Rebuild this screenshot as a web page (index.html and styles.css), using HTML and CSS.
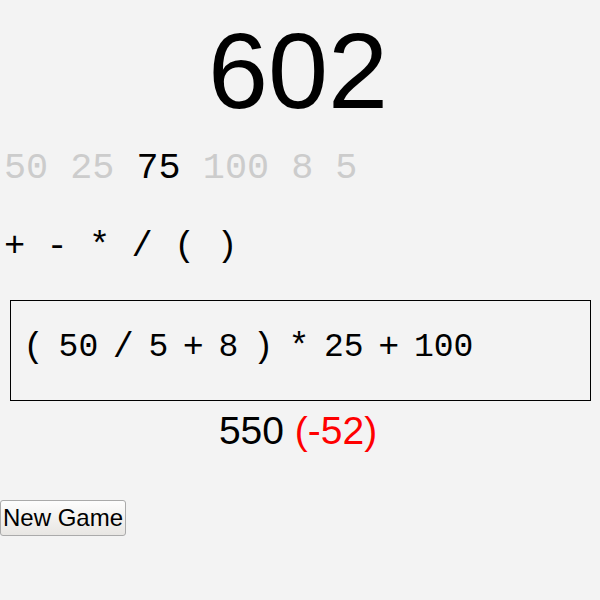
FILE: index.html
```html
<!DOCTYPE html>
<html>
<head>
<meta charset="utf-8">
<link rel="stylesheet" href="styles.css">
</head>
<body>
<div class="target">602</div>
<div class="numbers"><span class="num used">50</span> <span class="num used">25</span> <span class="num">75</span> <span class="num used">100</span> <span class="num used">8</span> <span class="num used">5</span></div>
<div class="ops">+ - * / ( )</div>
<div class="expr">
  <span class="tok op">(</span>
  <span class="tok n">50</span>
  <span class="tok op">/</span>
  <span class="tok n">5</span>
  <span class="tok op">+</span>
  <span class="tok n">8</span>
  <span class="tok op">)</span>
  <span class="tok op">*</span>
  <span class="tok n">25</span>
  <span class="tok op">+</span>
  <span class="tok n">100</span>
</div>
<div class="result">550 <span class="diff">(-52)</span></div>
<button class="new-game">New Game</button>
</body>
</html>
```
FILE: styles.css
```css
html, body {
  margin: 0;
  padding: 0;
  background: #f3f3f3;
}
body {
  font-family: "Liberation Sans", Arial, sans-serif;
  color: #000;
}
.target {
  margin-top: 8px;
  padding-right: 4px;
  font-size: 108px;
  text-align: center;
}
.numbers {
  margin-top: 14px;
  padding-left: 4px;
  font-family: "Liberation Mono", monospace;
  font-size: 36.8px;
}
.num.used {
  color: #cccccc;
}
.ops {
  margin-top: 38px;
  padding-left: 4px;
  font-family: "Liberation Mono", monospace;
  font-size: 35.4px;
}
.expr {
  margin: 33px 9px 0 10px;
  border: 1px solid #000;
  padding: 0 11px 6px 12px;
  box-sizing: border-box;
  height: 101px;
  display: flex;
  align-items: center;
  gap: 14.6px;
  font-family: "Liberation Mono", monospace;
}
.tok.op {
  font-size: 35px;
}
.tok.n {
  font-size: 33px;
}
.result {
  margin-top: 8px;
  padding-right: 4px;
  font-size: 39px;
  text-align: center;
}
.diff {
  color: #ff0000;
}
.new-game {
  margin-top: 47px;
  font-family: "Liberation Sans", Arial, sans-serif;
  font-size: 24px;
  padding: 3px 2px;
  border: 1px solid #aaa;
  border-radius: 3px;
  background: linear-gradient(#fdfdfd, #e8e6e3);
  color: #000;
}
```
